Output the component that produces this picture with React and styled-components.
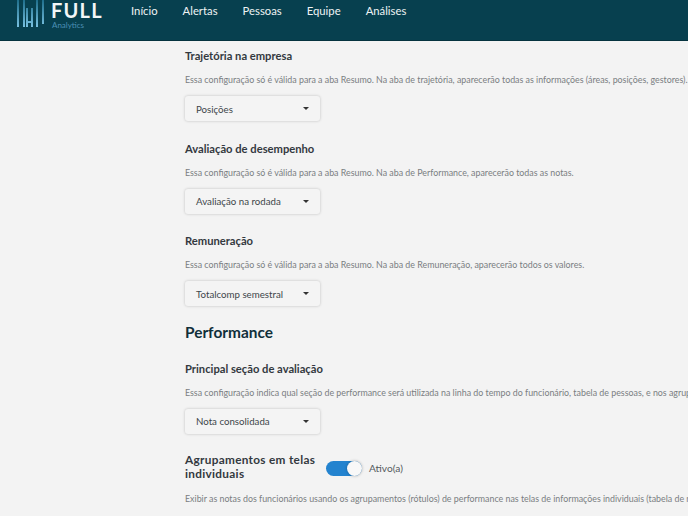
import React from "react";
import styled, { createGlobalStyle } from "styled-components";

const GlobalStyle = createGlobalStyle`
  html, body {
    margin: 0;
    height: 516px;
    overflow: hidden;
    background: #f3f3f3;
    font-family: Lato, "Open Sans", sans-serif;
  }
`;

const Header = styled.header`
  height: 40px;
  background: #07404f;
  border-bottom: 1px solid #05333f;
  display: flex;
  align-items: flex-start;
  overflow: hidden;
`;

const Logo = styled.div`
  display: flex;
  margin-left: 16px;
  width: 115px;
  gap: 7px;
`;

const LogoText = styled.div`
  display: flex;
  flex-direction: column;
`;

const LogoName = styled.span`
  color: #f2f6f7;
  font-size: 20px;
  font-weight: 700;
  line-height: 20px;
  letter-spacing: 1.2px;
`;

const LogoSub = styled.span`
  color: #4b8fb5;
  font-size: 8px;
  line-height: 10px;
  margin-left: 1px;
`;

const Nav = styled.nav`
  display: flex;
  gap: 25px;
  margin-top: 3px;
`;

const NavLink = styled.a`
  color: #eef3f4;
  font-size: 11.3px;
  line-height: 15px;
`;

const Content = styled.main`
  padding: 7px 0 0 185px;
  white-space: nowrap;
`;

const Section = styled.section`
  height: 92.5px;
`;

const SectionTitle = styled.h3`
  margin: 0;
  color: #33393f;
  font-size: 11.2px;
  font-weight: 700;
  line-height: 16px;
`;

const Description = styled.p`
  margin: 8px 0 0;
  color: #7a7e82;
  font-size: 8.85px;
  line-height: 16px;
`;

const Select = styled.div`
  width: 135px;
  height: 25px;
  margin-top: 8px;
  padding: 0 11px;
  box-sizing: border-box;
  display: flex;
  align-items: center;
  justify-content: space-between;
  background: #f4f4f4;
  border-radius: 3px;
  box-shadow: 0 0 3px rgba(0, 0, 0, 0.22);
  color: #40464a;
  font-size: 9.7px;
`;

const Caret = styled.span`
  width: 0;
  height: 0;
  border-left: 3px solid transparent;
  border-right: 3px solid transparent;
  border-top: 3px solid #333;
`;

const HeadingTwo = styled.h2`
  margin: -5px 0 0;
  height: 40px;
  color: #102f3a;
  font-size: 15.4px;
  font-weight: 700;
  line-height: 22px;
`;

const ToggleRow = styled.div`
  display: flex;
  align-items: center;
`;

const ToggleTitle = styled(SectionTitle)`
  width: 141px;
  font-size: 11.8px;
  line-height: 14px;
  letter-spacing: 0.3px;
  white-space: normal;
`;

const Track = styled.span`
  width: 36px;
  height: 15px;
  margin: 2px 7px 0 0;
  border-radius: 8px;
  background: #2383cf;
  position: relative;
`;

const Knob = styled.span`
  position: absolute;
  right: 0;
  top: 0;
  width: 15px;
  height: 15px;
  border-radius: 50%;
  background: #f8f8f8;
  box-shadow: 0 0 3px rgba(0, 0, 0, 0.3);
`;

const ToggleLabel = styled.span`
  margin-top: 2px;
  color: #555a5e;
  font-size: 10.2px;
`;

const ToggleDescription = styled(Description)`
  margin-top: 10px;
`;

const sections = [
  {
    title: "Trajetória na empresa",
    text: "Essa configuração só é válida para a aba Resumo. Na aba de trajetória, aparecerão todas as informações (áreas, posições, gestores).",
    value: "Posições",
  },
  {
    title: "Avaliação de desempenho",
    text: "Essa configuração só é válida para a aba Resumo. Na aba de Performance, aparecerão todas as notas.",
    value: "Avaliação na rodada",
  },
  {
    title: "Remuneração",
    text: "Essa configuração só é válida para a aba Resumo. Na aba de Remuneração, aparecerão todos os valores.",
    value: "Totalcomp semestral",
  },
];

// x, top, height of each logo bar
const bars = [
  [1, 0, 27],
  [7, 0, 27],
  [10, 8, 19],
  [15, 8, 19],
  [20, 0, 27],
  [26, 0, 24],
];

const LogoMark = () => (
  <svg width="28" height="28" viewBox="0 0 28 28">
    <defs>
      <linearGradient id="bar" x1="0" y1="0" x2="0" y2="28" gradientUnits="userSpaceOnUse">
        <stop offset="0" stopColor="#1f6f8c" />
        <stop offset="1" stopColor="#7cc4e4" />
      </linearGradient>
    </defs>
    {bars.map(([x, y, h], idx) => (
      <rect key={idx} x={x} y={y} width="2" height={h} fill="url(#bar)" />
    ))}
    <rect x="10" y="21" width="7" height="2" fill="url(#bar)" />
  </svg>
);

const App = () => (
  <>
    <GlobalStyle />
    <Header>
      <Logo>
        <LogoMark />
        <LogoText>
          <LogoName>FULL</LogoName>
          <LogoSub>Analytics</LogoSub>
        </LogoText>
      </Logo>
      <Nav>
        <NavLink>Início</NavLink>
        <NavLink>Alertas</NavLink>
        <NavLink>Pessoas</NavLink>
        <NavLink>Equipe</NavLink>
        <NavLink>Análises</NavLink>
      </Nav>
    </Header>
    <Content>
      {sections.map((s) => (
        <Section key={s.title}>
          <SectionTitle>{s.title}</SectionTitle>
          <Description>{s.text}</Description>
          <Select>
            {s.value}
            <Caret />
          </Select>
        </Section>
      ))}
      <HeadingTwo>Performance</HeadingTwo>
      <Section>
        <SectionTitle>Principal seção de avaliação</SectionTitle>
        <Description>
          Essa configuração indica qual seção de performance será utilizada na linha do tempo do funcionário, tabela de pessoas, e nos agrupamentos.
        </Description>
        <Select>
          Nota consolidada
          <Caret />
        </Select>
      </Section>
      <ToggleRow>
        <ToggleTitle>Agrupamentos em telas individuais</ToggleTitle>
        <Track>
          <Knob />
        </Track>
        <ToggleLabel>Ativo(a)</ToggleLabel>
      </ToggleRow>
      <ToggleDescription>
        Exibir as notas dos funcionários usando os agrupamentos (rótulos) de performance nas telas de informações individuais (tabela de notas).
      </ToggleDescription>
    </Content>
  </>
);

export default App;
